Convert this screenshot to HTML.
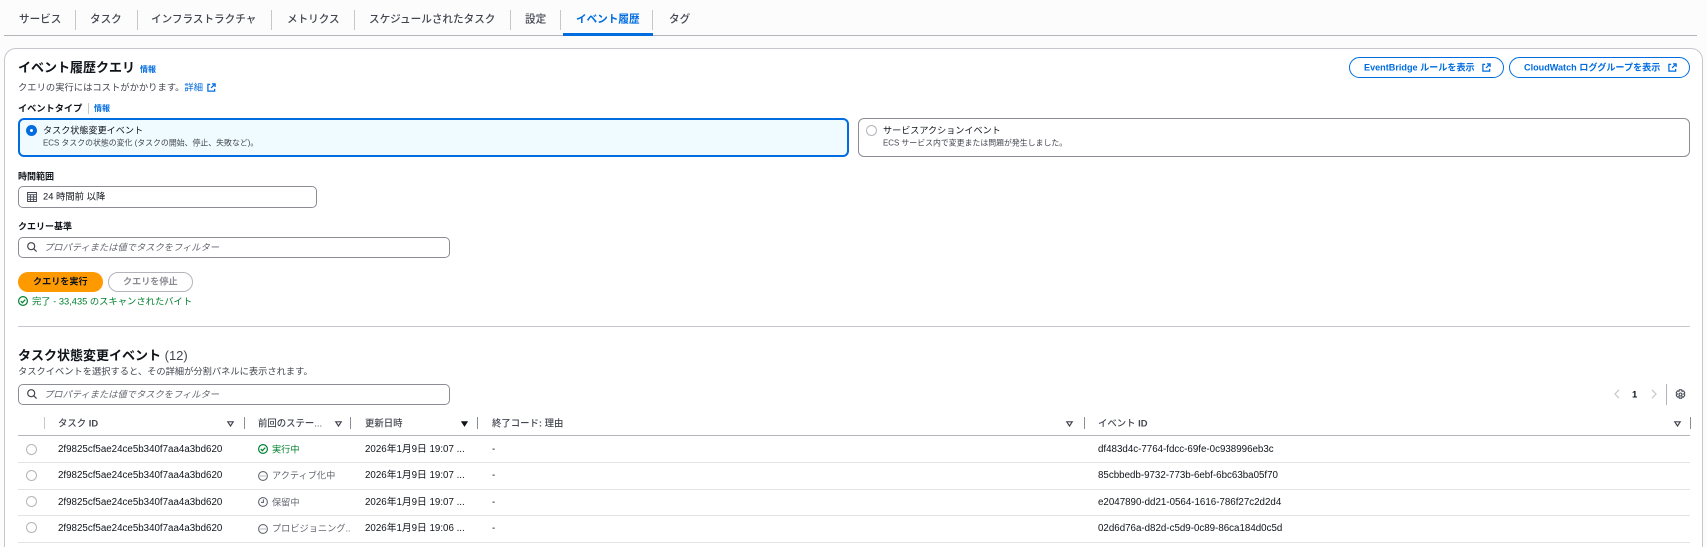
<!DOCTYPE html>
<html lang="ja"><head><meta charset="utf-8"><title>イベント履歴</title>
<style>
html,body{margin:0;padding:0;width:1707px;height:547px;overflow:hidden}
body{position:relative;background:#fcfcfd;font-family:"Liberation Sans","Noto Sans CJK JP",sans-serif;color:#0f141a;font-size:9.75px}
#w{position:absolute;left:0;top:0;width:1707px;height:547px;overflow:hidden}
.t{position:absolute;white-space:nowrap;transform:translateY(-50%);line-height:1.2}
.b{font-weight:700}
.box{position:absolute;box-sizing:border-box}
.sep{position:absolute;width:1px;background:#c6c6cd}
.tab{font-size:10.6px;color:#424650;font-weight:500}
.lnk{color:#006ce0;font-weight:700}
.hdr{font-size:9.4px;color:#424650;font-weight:500}
.hdr b{font-weight:700}
.gr{color:#656871;font-size:9.2px}
.line{position:absolute;height:1px;background:#e3e3e8;left:18px;width:1672px}
.rad{position:absolute;width:11px;height:11px;box-sizing:border-box;border:1px solid #b4b4bb;border-radius:50%;background:#fff}
svg{position:absolute;overflow:visible}
.ph{font-size:9.25px;color:#656871;font-style:italic}
.inp{background:#fff;border:1px solid #8c8c94;border-radius:5px}
</style></head><body><div id="w">
<div class="box" style="left:4px;top:35px;width:1693px;height:1px;background:#b4b4bb"></div>
<span class="t tab" style="left:19px;top:20px">サービス</span><div class="sep" style="left:75px;top:10px;height:20px"></div>
<span class="t tab" style="left:90px;top:20px">タスク</span><div class="sep" style="left:137px;top:10px;height:20px"></div>
<span class="t tab" style="left:151px;top:20px">インフラストラクチャ</span><div class="sep" style="left:271px;top:10px;height:20px"></div>
<span class="t tab" style="left:287px;top:20px">メトリクス</span><div class="sep" style="left:354px;top:10px;height:20px"></div>
<span class="t tab" style="left:369px;top:20px">スケジュールされたタスク</span><div class="sep" style="left:510px;top:10px;height:20px"></div>
<span class="t tab" style="left:525px;top:20px">設定</span><div class="sep" style="left:560px;top:10px;height:20px"></div>
<span class="t tab" style="left:576px;top:20px;color:#006ce0;font-weight:700">イベント履歴</span><div class="sep" style="left:652px;top:10px;height:20px"></div>
<span class="t tab" style="left:669px;top:20px">タグ</span>
<div class="box" style="left:563px;top:33px;width:90px;height:3px;background:#006ce0"></div>

<div class="box" style="left:4px;top:48px;width:1699px;height:510px;background:#fff;border:1px solid #c6c6cd;border-radius:12px"></div>
<span class="t b" style="left:18px;top:68px;font-size:13px">イベント履歴クエリ</span>
<span class="t lnk" style="left:140px;top:70px;font-size:8px">情報</span>
<span class="t" style="left:18px;top:88px;font-size:9.3px;color:#424650">クエリの実行にはコストがかかります。<span class="lnk" style="font-weight:400">詳細</span></span>
<svg style="left:207px;top:83px" width="9" height="9" viewBox="0 0 10 10" fill="none" stroke="#006ce0" stroke-width="1.4"><path d="M3.5 1.5H1v7.5h7.5V6.5M5.5 1H9v3.5M9 1L4.5 5.5"/></svg>
<span class="t b" style="left:18px;top:109px;font-size:9.2px">イベントタイプ</span><div class="sep" style="left:88px;top:103px;height:11px"></div>
<span class="t lnk" style="left:94px;top:109px;font-size:8px">情報</span>

<div class="box" style="left:18px;top:118px;width:831px;height:39px;background:#f0fbff;border:2px solid #006ce0;border-radius:6px"></div>
<div class="rad" style="left:26px;top:125px;border:4px solid #006ce0"></div>
<span class="t" style="left:43px;top:131px;font-size:9.1px">タスク状態変更イベント</span>
<span class="t" style="left:43px;top:142.5px;font-size:7.9px;color:#424650">ECS タスクの状態の変化 (タスクの開始、停止、失敗など)。</span>
<div class="box" style="left:858px;top:118px;width:832px;height:39px;border:1px solid #8c8c94;border-radius:6px"></div>
<div class="rad" style="left:866px;top:125px;border-color:#b4b4bb"></div>
<span class="t" style="left:883px;top:131px;font-size:9.1px">サービスアクションイベント</span>
<span class="t" style="left:883px;top:142.5px;font-size:7.9px;color:#424650">ECS サービス内で変更または問題が発生しました。</span>

<div class="box" style="left:1349px;top:57px;width:155px;height:21px;border:1px solid #006ce0;border-radius:11px"></div>
<span class="t lnk" style="left:1364px;top:67.5px;font-size:9.1px">EventBridge ルールを表示</span>
<svg style="left:1482px;top:63px" width="9" height="9" viewBox="0 0 10 10" fill="none" stroke="#006ce0" stroke-width="1.4"><path d="M3.5 1.5H1v7.5h7.5V6.5M5.5 1H9v3.5M9 1L4.5 5.5"/></svg>
<div class="box" style="left:1509px;top:57px;width:181px;height:21px;border:1px solid #006ce0;border-radius:11px"></div>
<span class="t lnk" style="left:1524px;top:67.5px;font-size:9.1px">CloudWatch ロググループを表示</span>
<svg style="left:1668px;top:63px" width="9" height="9" viewBox="0 0 10 10" fill="none" stroke="#006ce0" stroke-width="1.4"><path d="M3.5 1.5H1v7.5h7.5V6.5M5.5 1H9v3.5M9 1L4.5 5.5"/></svg>

<span class="t b" style="left:18px;top:177px;font-size:9px">時間範囲</span>
<div class="box inp" style="left:18px;top:186px;width:299px;height:22px"></div>
<svg style="left:27px;top:192px" width="10" height="10" viewBox="0 0 10 10" fill="none" stroke="#424650"><path d="M.5.5h9v9h-9zM.5 2.7h9M3.4 2.7v6.8M6.6 2.7v6.8M.5 5h9M.5 7.3h9" stroke-width=".9"/></svg>
<span class="t" style="left:43px;top:197px;font-size:9.35px">24 時間前 以降</span>

<span class="t b" style="left:18px;top:227px;font-size:9px">クエリー基準</span>
<div class="box inp" style="left:18px;top:237px;width:432px;height:21px"></div>
<svg style="left:27px;top:242px" width="10" height="10" viewBox="0 0 10 10" fill="none" stroke="#424650" stroke-width="1.2"><circle cx="4.2" cy="4.2" r="3.5"/><path d="M6.8 6.8L9.6 9.6"/></svg>
<span class="t ph" style="left:44px;top:248px">プロパティまたは値でタスクをフィルター</span>

<div class="box" style="left:18px;top:272px;width:85px;height:20px;background:#ff9900;border-radius:10px"></div>
<span class="t b" style="left:33px;top:282px;font-size:9.1px">クエリを実行</span>
<div class="box" style="left:108px;top:272px;width:85px;height:20px;border:1px solid #b4b4bb;border-radius:10px"></div>
<span class="t" style="left:123px;top:282px;font-size:9.1px;color:#8c8c94;font-weight:700">クエリを停止</span>
<svg style="left:18px;top:296px" width="10" height="10" viewBox="0 0 10 10" fill="none" stroke="#00802f" stroke-width="1.2"><circle cx="5" cy="5" r="4.4"/><path d="M2.8 5.1L4.4 6.7 7.3 3.6"/></svg>
<span class="t" style="left:32px;top:301.5px;font-size:9.3px;color:#00802f">完了 - 33,435 のスキャンされたバイト</span>
<div class="box" style="left:18px;top:326px;width:1672px;height:1px;background:#c6c6cd"></div>

<span class="t b" style="left:18px;top:356px;font-size:13px">タスク状態変更イベント <span style="font-weight:400;color:#424650">(12)</span></span>
<span class="t" style="left:18px;top:372px;font-size:9.25px;color:#424650">タスクイベントを選択すると、その詳細が分割パネルに表示されます。</span>
<div class="box inp" style="left:18px;top:384px;width:432px;height:21px"></div>
<svg style="left:27px;top:389px" width="10" height="10" viewBox="0 0 10 10" fill="none" stroke="#424650" stroke-width="1.2"><circle cx="4.2" cy="4.2" r="3.5"/><path d="M6.8 6.8L9.6 9.6"/></svg>
<span class="t ph" style="left:44px;top:394.5px">プロパティまたは値でタスクをフィルター</span>

<svg style="left:1613px;top:389px" width="8" height="10" viewBox="0 0 8 10" fill="none" stroke="#c6c6cd" stroke-width="1.2"><path d="M6 .8L2 5l4 4.2"/></svg>
<span class="t b" style="left:1632px;top:394.5px;font-size:9.5px">1</span>
<svg style="left:1650px;top:389px" width="8" height="10" viewBox="0 0 8 10" fill="none" stroke="#c6c6cd" stroke-width="1.2"><path d="M2 .8L6 5 2 9.2"/></svg>
<div class="sep" style="left:1666px;top:384px;height:21px;background:#b4b4bb"></div>
<svg style="left:1675px;top:389px" width="11" height="11" viewBox="0 0 11 11" fill="none" stroke="#424650" stroke-width="1.1"><path d="M4.3.8h2.4l.4 1.5 1.5-.4 1.2 2-1.1 1.1 1.1 1.1-1.2 2-1.5-.4-.4 1.5H4.3l-.4-1.5-1.5.4-1.2-2 1.1-1.1L1.2 3.9l1.2-2 1.5.4z"/><circle cx="5.5" cy="5.5" r="1.5"/></svg>

<div class="sep" style="left:44px;top:417px;height:12px"></div>
<span class="t hdr" style="left:58px;top:423px">タスク <b>ID</b></span>
<svg style="left:227px;top:421px" width="7" height="6" viewBox="0 0 7 6" fill="none" stroke="#424650" stroke-width="1.2"><path d="M.8.8h5.4L3.5 5z"/></svg>
<div class="sep" style="left:244px;top:417px;height:12px;background:#8c8c94"></div>
<span class="t hdr" style="left:258px;top:423px">前回のステー...</span>
<svg style="left:335px;top:421px" width="7" height="6" viewBox="0 0 7 6" fill="none" stroke="#424650" stroke-width="1.2"><path d="M.8.8h5.4L3.5 5z"/></svg>
<div class="sep" style="left:350px;top:417px;height:12px;background:#8c8c94"></div>
<span class="t hdr" style="left:365px;top:423px">更新日時</span>
<svg style="left:461px;top:421px" width="7" height="6" viewBox="0 0 7 6" fill="#0f141a" stroke="#0f141a"><path d="M.8.8h5.4L3.5 5z"/></svg>
<div class="sep" style="left:477px;top:417px;height:12px;background:#8c8c94"></div>
<span class="t hdr" style="left:492px;top:423px">終了コード<b>:</b> 理由</span>
<svg style="left:1066px;top:421px" width="7" height="6" viewBox="0 0 7 6" fill="none" stroke="#424650" stroke-width="1.2"><path d="M.8.8h5.4L3.5 5z"/></svg>
<div class="sep" style="left:1084px;top:417px;height:12px;background:#8c8c94"></div>
<span class="t hdr" style="left:1098px;top:423px">イベント <b>ID</b></span>
<svg style="left:1674px;top:421px" width="7" height="6" viewBox="0 0 7 6" fill="none" stroke="#424650" stroke-width="1.2"><path d="M.8.8h5.4L3.5 5z"/></svg>
<div class="sep" style="left:1690px;top:417px;height:12px;background:#8c8c94"></div>
<div class="line" style="top:435px;background:#b4b4bb"></div>

<div class="rad" style="left:26px;top:444px"></div>
<span class="t" style="left:58px;top:450px">2f9825cf5ae24ce5b340f7aa4a3bd620</span>
<svg style="left:258px;top:444px" width="10" height="10" viewBox="0 0 10 10" fill="none" stroke="#00802f" stroke-width="1.2"><circle cx="5" cy="5" r="4.4"/><path d="M2.8 5.1L4.4 6.7 7.3 3.6"/></svg>
<span class="t" style="left:272px;top:449.5px;color:#00802f;font-size:9.2px">実行中</span>
<span class="t" style="left:365px;top:450px">2026年1月9日 19:07 ...</span>
<span class="t" style="left:492px;top:450px">-</span>
<span class="t" style="left:1098px;top:450px">df483d4c-7764-fdcc-69fe-0c938996eb3c</span>
<div class="line" style="top:462px"></div>

<div class="rad" style="left:26px;top:470px"></div>
<span class="t" style="left:58px;top:476px">2f9825cf5ae24ce5b340f7aa4a3bd620</span>
<svg style="left:258px;top:471px" width="10" height="10" viewBox="0 0 10 10" fill="none" stroke="#656871" stroke-width="1.1"><circle cx="5" cy="5" r="4.4"/><path d="M2.5 5h1M4.5 5h1M6.5 5h1"/></svg>
<span class="t gr" style="left:272px;top:475.5px">アクティブ化中</span>
<span class="t" style="left:365px;top:476px">2026年1月9日 19:07 ...</span>
<span class="t" style="left:492px;top:476px">-</span>
<span class="t" style="left:1098px;top:476px">85cbbedb-9732-773b-6ebf-6bc63ba05f70</span>
<div class="line" style="top:489px"></div>

<div class="rad" style="left:26px;top:496px"></div>
<span class="t" style="left:58px;top:503px">2f9825cf5ae24ce5b340f7aa4a3bd620</span>
<svg style="left:258px;top:497px" width="10" height="10" viewBox="0 0 10 10" fill="none" stroke="#656871" stroke-width="1.1"><circle cx="5" cy="5" r="4.4"/><path d="M5.4 2.4V5.4H3"/></svg>
<span class="t gr" style="left:272px;top:502.5px">保留中</span>
<span class="t" style="left:365px;top:503px">2026年1月9日 19:07 ...</span>
<span class="t" style="left:492px;top:503px">-</span>
<span class="t" style="left:1098px;top:503px">e2047890-dd21-0564-1616-786f27c2d2d4</span>
<div class="line" style="top:515px"></div>

<div class="rad" style="left:26px;top:522px"></div>
<span class="t" style="left:58px;top:529px">2f9825cf5ae24ce5b340f7aa4a3bd620</span>
<svg style="left:258px;top:524px" width="10" height="10" viewBox="0 0 10 10" fill="none" stroke="#656871" stroke-width="1.1"><circle cx="5" cy="5" r="4.4"/><path d="M2.5 5h1M4.5 5h1M6.5 5h1"/></svg>
<span class="t gr" style="left:272px;top:528.5px">プロビジョニング..</span>
<span class="t" style="left:365px;top:529px">2026年1月9日 19:06 ...</span>
<span class="t" style="left:492px;top:529px">-</span>
<span class="t" style="left:1098px;top:529px">02d6d76a-d82d-c5d9-0c89-86ca184d0c5d</span>
<div class="line" style="top:542px"></div>
</div></body></html>
